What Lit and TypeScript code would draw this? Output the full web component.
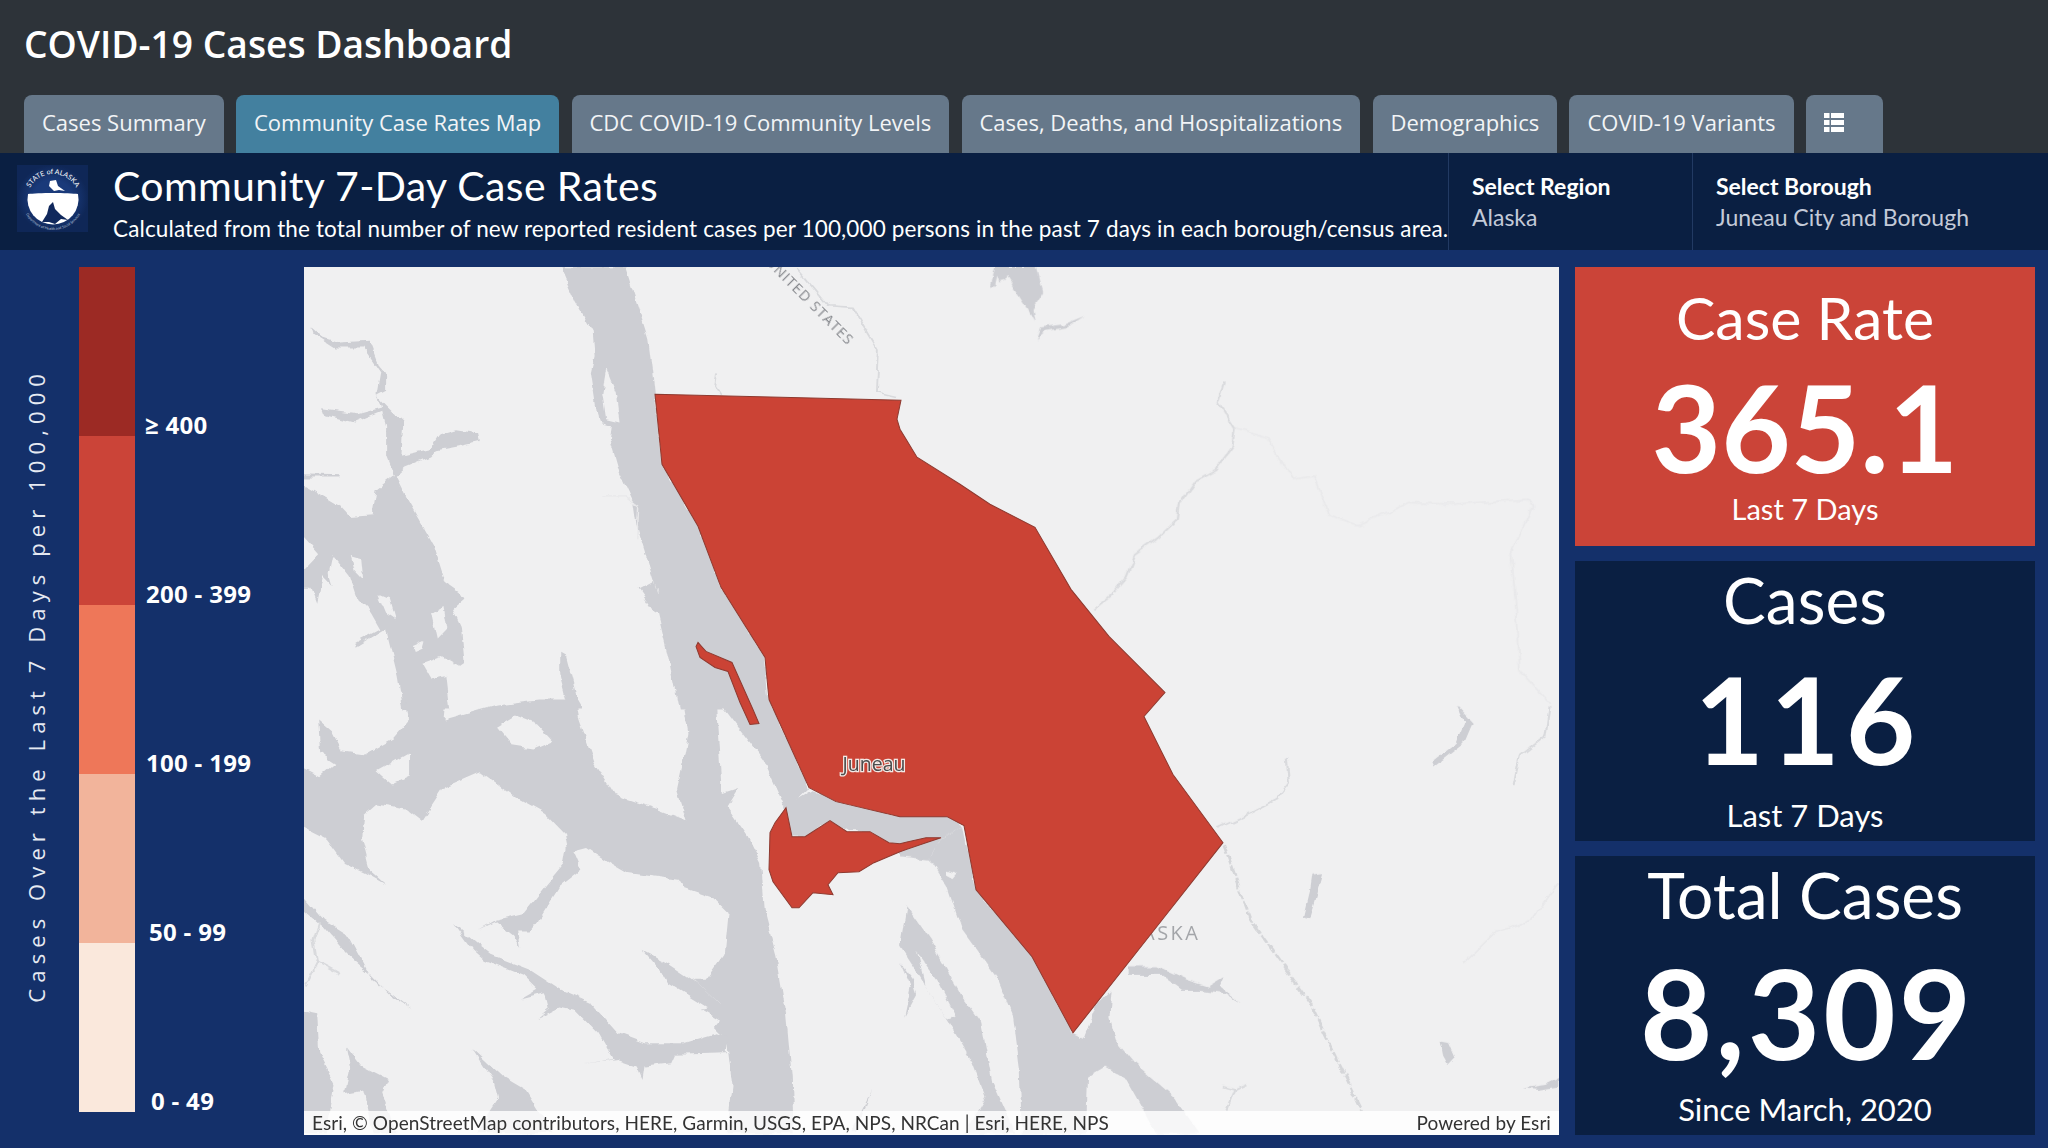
import { LitElement, css, html, svg } from "lit";
import { customElement } from "lit/decorators.js";

const TABS = [
  "Cases Summary",
  "Community Case Rates Map",
  "CDC COVID-19 Community Levels",
  "Cases, Deaths, and Hospitalizations",
  "Demographics",
  "COVID-19 Variants",
];

// top to bottom, indent is where the label starts next to the bar
const LEGEND = [
  { color: "#9c2a24", label: "≥ 400", indent: 10 },
  { color: "#cb4438", label: "200 - 399", indent: 11 },
  { color: "#ee7759", label: "100 - 199", indent: 11 },
  { color: "#f2b49b", label: "50 - 99", indent: 14 },
  { color: "#fae8dc", label: "0 - 49", indent: 16 },
];

const STATS = [
  { kind: "rate", title: "Case Rate", value: "365.1", note: "Last 7 Days" },
  { kind: "cases", title: "Cases", value: "116", note: "Last 7 Days" },
  { kind: "total", title: "Total Cases", value: "8,309", note: "Since March, 2020" },
];

// map shapes, traced in two local grids (see the transforms in renderMap)
const WATER_WEST = [
  "680,25 850,25 885,150 910,240 925,380 945,615 1040,800 1100,985 1215,1195 1225,1350 990,1350 960,1180 935,1060 885,990 935,1000 880,800 870,720 830,620 810,540 815,500 780,490 760,340 770,290 765,220 720,130",
  "30,205 60,235 100,250 180,245 205,320 225,345 225,395 200,410 225,440 270,490 265,590 340,570 365,525 410,510 465,520 470,545 430,555 360,570 340,595 275,625 250,650 280,720 320,800 350,860 380,970 435,1015 400,1050 420,1100 430,1210 380,1250 390,1350 270,1350 255,1250 225,1110 145,1165 145,1150 210,1110 185,1060 150,1020 130,950 85,885 75,940 85,980 60,950 45,1030 30,985 0,985 0,945 50,885 0,820 0,670 110,745 130,770 190,765 200,690 245,650 225,590 225,500 215,455 140,490 60,465 55,450 150,465 215,445 200,405 210,340 165,265 90,265 35,225",
  "0,645 105,648 100,655 0,655",
  "885,990 925,965 950,1070 920,1050",
  "680,1180 695,1190 725,1320 740,1350 705,1350 680,1240",
];
const LAND_WEST = [
  "205,1005 235,1020 250,1080 225,1060",
  "130,890 160,900 165,960 140,930",
  "320,1210 370,1190 425,1225 380,1250 345,1260",
  "295,1160 325,1145 320,1165 300,1175",
  "800,330 825,400 835,490 800,480 790,400",
  "345,1060 375,1040 385,1110 360,1140",
];
const WATER_SOUTH = [
  "275,0 380,0 375,60 515,15 620,0 720,0 730,60 770,190 820,285 850,300 930,330 1010,365 985,270 1000,190 1015,100 1000,0 1095,0 1090,20 1105,280 1145,265 1115,320 1170,410 1205,490 1215,640 1245,770 1270,940 1285,1130 1290,1300 1115,1300 1130,1160 1115,1020 1080,980 1095,960 1050,930 1100,915 1030,840 1060,840 1110,760 1120,640 1075,590 1000,560 990,540 855,520 810,490 750,445 700,460 690,400 640,340 560,290 470,215 380,260 320,365 280,330 200,315 165,350 160,420 180,510 225,555 170,520 115,490 70,420 0,380 0,200 50,230 90,190 50,160 45,60 85,100 110,155 170,165 240,120 285,60",
  "1265,320 1340,270 1400,305 1568,350 1568,440 1540,430 1490,395 1430,395 1385,362 1320,412 1285,410",
  "1225,0 1330,265 1270,330 1210,180 1150,90 1090,0",
  "700,420 720,470 735,510 680,560 630,650 600,695 570,695 578,745 560,710 510,665 465,690 510,660 585,640 640,560 690,490",
  "400,670 460,730 500,765 600,810 680,870 760,910 830,1000 900,1030 1000,1030 1090,1000 1120,1010 1115,1060 980,1065 970,1090 900,1100 895,1140 880,1100 830,1080 740,1095 820,1080 780,1000 720,930 680,920 620,955 650,925 640,880 575,900 620,870 580,825 480,780 450,750",
  "895,750 960,790 1040,850 1100,915 1080,935 1030,900 960,850 940,810",
  "0,580 60,660 130,710 190,840 295,930 240,890 180,820 120,760 60,680 0,620",
  "0,930 45,940 50,1060 90,1150 70,1300 0,1300",
  "120,1040 160,1100 230,1140 215,1180 250,1300 190,1300 165,1170 115,1180 130,1100",
  "450,1045 530,1130 590,1170 660,1300 460,1300 520,1195 510,1150",
  "1495,1170 1450,1300 1438,1300",
];
const LAND_SOUTH = [
  "515,85 565,50 620,75 660,125 610,150 555,140",
  "200,215 285,160 285,230 240,255",
];
const WATER_EAST_TOP = [
  "210,80 220,25 320,25 335,100 310,150 315,185 300,150 250,50 245,65 230,70 225,50 220,80",
  "320,240 330,205 385,195 432,170 390,205 340,215",
];
const WATER_EAST = [
  "0,340 110,345 150,378 95,420 70,480 0,470",
  "95,420 150,378 178,570 310,770 405,1000 430,1015 460,915 495,870 490,950 505,1020 550,1090 640,1190 700,1300 600,1300 530,1140 480,1100 440,1130 435,1300 285,1300 280,1100 265,950 230,840 145,690 110,560 70,480",
  "15,620 70,720 140,880 190,970 215,1140 270,1300 150,1300 200,1190 170,1090 120,980 85,910 30,800 0,740",
  "0,790 30,840 40,880 10,950 25,860",
  "535,800 600,800 670,840 720,860 760,830 750,860 800,910 760,880 700,870 660,870 610,825 535,825",
  "1300,15 1340,70 1320,130 1250,200 1245,185 1300,130 1320,70",
  "965,525 990,520 975,590 960,655 945,650 960,570",
  "1265,1025 1285,1030 1300,1075 1285,1095 1270,1060",
  "1455,1165 1510,1155 1540,1135 1540,1160 1490,1170",
];
const LAND_EAST = [
  "110,510 135,520 125,535 110,525",
  "40,760 90,850 130,950 110,960 60,860",
];

const RED_MAIN =
  "655,395 781,398 901,401 897,420 900,430 917,458 960,485 990,505 1035,528 1071,590 1109,637 1165,693 1144,717 1173,775 1223,843 1073,1033 1032,957 976,890 964,826 947,817 900,817 836,802 809,788 769,700 765,658 721,588 698,527 662,465";
const RED_STRIP =
  "698,643 706,652 732,663 753,710 759,724 750,725 740,703 728,672 715,668 700,658 696,647";
const RED_LOWER =
  "786,808 792,837 805,837 830,821 847,832 870,832 889,843 900,844 926,838 941,838 926,843 900,852 874,863 859,872 838,873 828,885 833,895 813,893 799,908 792,908 773,882 769,870 770,833 775,823";

const poly = (points: string[], cls: string) =>
  points.map((p) => svg`<polygon class=${cls} points=${p}></polygon>`);

@customElement("app-root")
export class AppRoot extends LitElement {
  static styles = css`
    :host {
      display: block;
      width: 2048px;
      height: 1148px;
      overflow: hidden;
      font-family: "Open Sans", sans-serif;
      color: #fff;
      background: #14306a;
    }

    .top {
      height: 153px;
      background: #2d3339;
      padding-left: 24px;
      display: flex;
      flex-direction: column;
      justify-content: space-between;
    }
    h1 {
      margin: 18px 0 0;
      font-size: 37.2px;
      line-height: 52px;
      font-weight: 600;
    }
    .tabs {
      display: flex;
      gap: 12.3px;
    }
    .tab {
      height: 58px;
      box-sizing: border-box;
      padding: 11px 18px 0;
      background: #66788a;
      border-radius: 8px 8px 0 0;
      font-size: 22px;
      line-height: 32px;
      color: #f2f4f6;
      white-space: nowrap;
    }
    .tab.active {
      background: #43809f;
    }
    .tab.icon {
      width: 77px;
      box-sizing: border-box;
      padding-top: 18px;
    }
    .tab.icon svg {
      display: block;
    }

    .bar {
      height: 97px;
      background: #0a1f42;
      display: flex;
      font-family: Lato, sans-serif;
    }
    .logo {
      width: 71px;
      height: 67px;
      margin: 12px 25px 0 17px;
      flex: none;
    }
    .heading {
      flex: 1;
      min-width: 0;
    }
    .heading h2 {
      margin: 9px 0 0;
      font-size: 41px;
      line-height: 48px;
      font-weight: 400;
      letter-spacing: 0.35px;
    }
    .heading p {
      margin: 5px 0 0;
      font-size: 22.5px;
      line-height: 28px;
      letter-spacing: 0.13px;
      white-space: nowrap;
    }
    .picker {
      box-sizing: border-box;
      border-left: 1px solid #223a63;
      padding: 17px 0 0 23px;
      flex: none;
    }
    .picker.region {
      width: 244px;
    }
    .picker.borough {
      width: 356px;
    }
    .picker b {
      display: block;
      font-size: 23px;
      line-height: 32px;
      font-weight: 700;
    }
    .picker span {
      display: block;
      font-size: 23px;
      line-height: 31px;
      color: #c3cad8;
    }

    main {
      height: 898px;
      box-sizing: border-box;
      padding: 17px 13px 13px 0;
      display: grid;
      grid-template-columns: 288px 1fr 460px;
      column-gap: 16px;
      font-family: Lato, sans-serif;
    }

    .legend {
      display: flex;
      height: 845px;
    }
    .axis {
      width: 79px;
      flex: none;
      display: flex;
      align-items: center;
      justify-content: center;
    }
    .axis span {
      writing-mode: vertical-rl;
      transform: rotate(180deg);
      font-family: "Open Sans", sans-serif;
      font-size: 22px;
      letter-spacing: 6.1px;
      white-space: nowrap;
      color: #e6eaf2;
      padding-left: 8px;
      margin-bottom: 8px;
    }
    .scale {
      flex: 1;
      display: grid;
      grid-auto-rows: 1fr;
    }
    .step {
      display: flex;
      align-items: flex-end;
    }
    .swatch {
      width: 56px;
      height: 100%;
      flex: none;
    }
    .step b {
      font-family: "Open Sans", sans-serif;
      font-size: 24px;
      line-height: 32px;
      letter-spacing: 0.3px;
      margin-bottom: -5px;
      font-weight: 700;
      white-space: nowrap;
      position: relative;
    }

    .map {
      position: relative;
      background: #f0f0f1;
      overflow: hidden;
    }
    .map svg {
      display: block;
      width: 100%;
      height: 100%;
    }
    .water {
      fill: #cdced3;
    }
    .land {
      fill: #f0f0f1;
    }
    .red {
      fill: #cb4335;
      stroke: #8e3a30;
      stroke-width: 1;
    }
    .river {
      fill: none;
      stroke: #d9dadd;
      stroke-width: 5;
    }
    .faint {
      fill: none;
      stroke: #e8e8ea;
      stroke-width: 4;
    }
    .dash {
      fill: none;
      stroke: #d5d6d9;
      stroke-width: 7;
      stroke-dasharray: 30 6;
    }
    .place {
      font-family: "Open Sans", sans-serif;
      font-size: 14.5px;
      fill: #85878c;
      letter-spacing: 1px;
    }
    .state {
      font-size: 20px;
      fill: #a3a5a9;
      letter-spacing: 2.5px;
    }
    .city {
      font-family: "Open Sans", sans-serif;
      font-size: 19.5px;
      fill: #4c4c4c;
      stroke: #f3e9e6;
      stroke-width: 2.5px;
      paint-order: stroke;
      text-anchor: middle;
    }
    .credit {
      position: absolute;
      left: 0;
      right: 0;
      bottom: 0;
      height: 24px;
      padding: 0 8px 2px;
      box-sizing: border-box;
      display: flex;
      justify-content: space-between;
      align-items: center;
      background: rgba(255, 255, 255, 0.82);
      color: #333;
      font-size: 19px;
      letter-spacing: 0.06px;
      white-space: nowrap;
    }

    .stats {
      display: grid;
      grid-auto-rows: 1fr;
      row-gap: 15px;
    }
    .card {
      background: #0a1f42;
      text-align: center;
      overflow: hidden;
    }
    .card.rate {
      background: #cb4438;
    }
    .card div {
      white-space: nowrap;
    }
    .title {
      font-size: 64px;
      line-height: 70px;
      margin-top: 4px;
    }
    .value {
      font-size: 120px;
      line-height: 130px;
      font-weight: 700;
    }
    .note {
      font-size: 31px;
      line-height: 40px;
    }
    .rate .title {
      font-size: 59px;
      margin-top: 16px;
    }
    .rate .value {
      line-height: 120px;
      margin-top: 14px;
    }
    .rate .note {
      font-size: 29px;
      margin-top: 2px;
    }
    .cases .value {
      margin-top: 19px;
      letter-spacing: 6px;
      padding-left: 6px;
    }
    .cases .note {
      margin-top: 11px;
    }
    .total .value {
      font-size: 125px;
      letter-spacing: 3px;
      padding-left: 4px;
      margin-top: 17px;
    }
    .total .note {
      margin-top: 12px;
    }
  `;

  renderLogo() {
    return html`<svg class="logo" viewBox="0 0 71 67">
      <defs>
        <radialGradient id="logo-bg">
          <stop offset="0.55" stop-color="#1a3a7a"></stop>
          <stop offset="1" stop-color="#0f2757"></stop>
        </radialGradient>
        <path id="ring-top" d="M10,35 A26,26 0 0 1 62,35"></path>
        <path id="ring-low" d="M5,34 A31,31 0 0 0 67,34"></path>
      </defs>
      <rect width="71" height="67" fill="url(#logo-bg)"></rect>
      <path d="M11,29 C20,27.5 52,27.5 61,29 A25.5,25.5 0 1 1 11,29 Z" fill="#fff"></path>
      <path d="M25,57 L30,49 L32,41 L36,37 L38,44 L44,50 L51,55 L44,54 L38,59 L32,57 Z" fill="#10285c"></path>
      <path d="M33,16 L39,15 L41,21 L48,26 L42,25 L37,26 L32,21 Z" fill="#fff"></path>
      <text font-family="Lato, sans-serif" font-size="7" fill="#fff" text-anchor="middle">
        <textPath href="#ring-top" startOffset="50%">STATE of ALASKA</textPath>
      </text>
      <text font-family="Lato, sans-serif" font-size="3.6" fill="#b9c3d8" text-anchor="middle">
        <textPath href="#ring-low" startOffset="50%">Department of Health and Social Services</textPath>
      </text>
    </svg>`;
  }

  renderMap() {
    return html`<svg viewBox="304 268 1255 867" preserveAspectRatio="none">
      <defs>
        <filter id="coast" x="-2%" y="-2%" width="104%" height="104%">
          <feTurbulence type="fractalNoise" baseFrequency="0.07" numOctaves="3" seed="4"></feTurbulence>
          <feDisplacementMap in="SourceGraphic" scale="7" xChannelSelector="R" yChannelSelector="G"></feDisplacementMap>
        </filter>
      </defs>
      <g filter="url(#coast)">
        <g transform="translate(300 260) scale(0.3827 0.3333)">
          ${poly(WATER_WEST, "water")} ${poly(LAND_WEST, "land")}
          <path class="river" d="M1300,30 L1380,140 L1445,145 L1510,270 L1505,400 L1560,415"></path>
          <path class="river" d="M1090,340 L1085,380 L1100,405"></path>
          <path class="faint" d="M790,710 L850,710 L885,740 L880,840"></path>
        </g>
        <g transform="translate(300 700) scale(0.3827 0.3333)">
          ${poly(WATER_SOUTH, "water")} ${poly(LAND_SOUTH, "land")}
          <path class="river" d="M50,665 L35,720 L45,790 L15,860 M40,785 L105,825"></path>
        </g>
        <g transform="translate(900 260) scale(0.4274 0.3333)">
          ${poly(WATER_EAST_TOP, "water")}
          <path class="faint" d="M785,505 L860,535 L920,660 L970,650 L1005,770 L1070,800 L1190,730 L1290,735 L1470,720 L1480,740 L1430,880 L1445,1100 L1450,1230 L1520,1330"></path>
          <path class="river" d="M760,370 L745,430 L785,510 L780,560 L740,630 L690,665 L655,730 L650,780 L600,840 L550,885 L530,950 L490,1010 L450,1050"></path>
        </g>
        <g transform="translate(900 700) scale(0.4274 0.3333)">
          ${poly(WATER_EAST, "water")} ${poly(LAND_EAST, "land")}
          <path class="river" d="M905,180 L910,250 L880,300 L820,340 L745,385"></path>
          <path class="dash" d="M757,430 L820,660 L960,910 L1080,1232"></path>
          <path class="river" d="M755,1160 L785,1170 L810,1155 M785,1170 L765,1232"></path>
          <path class="river" d="M1520,20 L1510,110 L1450,170 L1435,260"></path>
          <path class="faint" d="M1540,550 L1480,660 L1390,700 L1320,790"></path>
        </g>
      </g>
      <text class="place" text-anchor="end" transform="translate(848 347) rotate(45)">UNITED STATES</text>
      <text class="place state" text-anchor="end" x="1200.5" y="940">ALASKA</text>
      <polygon class="red" points=${RED_MAIN}></polygon>
      <polygon class="red" points=${RED_STRIP}></polygon>
      <polygon class="red" points=${RED_LOWER}></polygon>
      <text class="city" x="874" y="771">Juneau</text>
    </svg>`;
  }

  render() {
    return html`
      <div class="top">
        <h1>COVID-19 Cases Dashboard</h1>
        <div class="tabs">
          ${TABS.map(
            (t, i) => html`<div class="tab ${i === 1 ? "active" : ""}">${t}</div>`
          )}
          <div class="tab icon">
            <svg width="20" height="19" viewBox="0 0 20 19" fill="#fff">
              <rect y="0" width="5.5" height="5"></rect>
              <rect x="7" y="0" width="13" height="5"></rect>
              <rect y="7" width="5.5" height="5"></rect>
              <rect x="7" y="7" width="13" height="5"></rect>
              <rect y="14" width="5.5" height="5"></rect>
              <rect x="7" y="14" width="13" height="5"></rect>
            </svg>
          </div>
        </div>
      </div>

      <div class="bar">
        ${this.renderLogo()}
        <div class="heading">
          <h2>Community 7-Day Case Rates</h2>
          <p>Calculated from the total number of new reported resident cases per 100,000 persons in the past 7 days in each borough/census area.</p>
        </div>
        <div class="picker region"><b>Select Region</b><span>Alaska</span></div>
        <div class="picker borough"><b>Select Borough</b><span>Juneau City and Borough</span></div>
      </div>

      <main>
        <div class="legend">
          <div class="axis"><span>Cases Over the Last 7 Days per 100,000</span></div>
          <div class="scale">
            ${LEGEND.map(
              (s) => html`<div class="step">
                <div class="swatch" style="background:${s.color}"></div>
                <b style="margin-left:${s.indent}px">${s.label}</b>
              </div>`
            )}
          </div>
        </div>

        <div class="map">
          ${this.renderMap()}
          <div class="credit">
            <span>Esri, © OpenStreetMap contributors, HERE, Garmin, USGS, EPA, NPS, NRCan | Esri, HERE, NPS</span>
            <span>Powered by Esri</span>
          </div>
        </div>

        <div class="stats">
          ${STATS.map(
            (s) => html`<div class="card ${s.kind}">
              <div class="title">${s.title}</div>
              <div class="value">${s.value}</div>
              <div class="note">${s.note}</div>
            </div>`
          )}
        </div>
      </main>
    `;
  }
}
